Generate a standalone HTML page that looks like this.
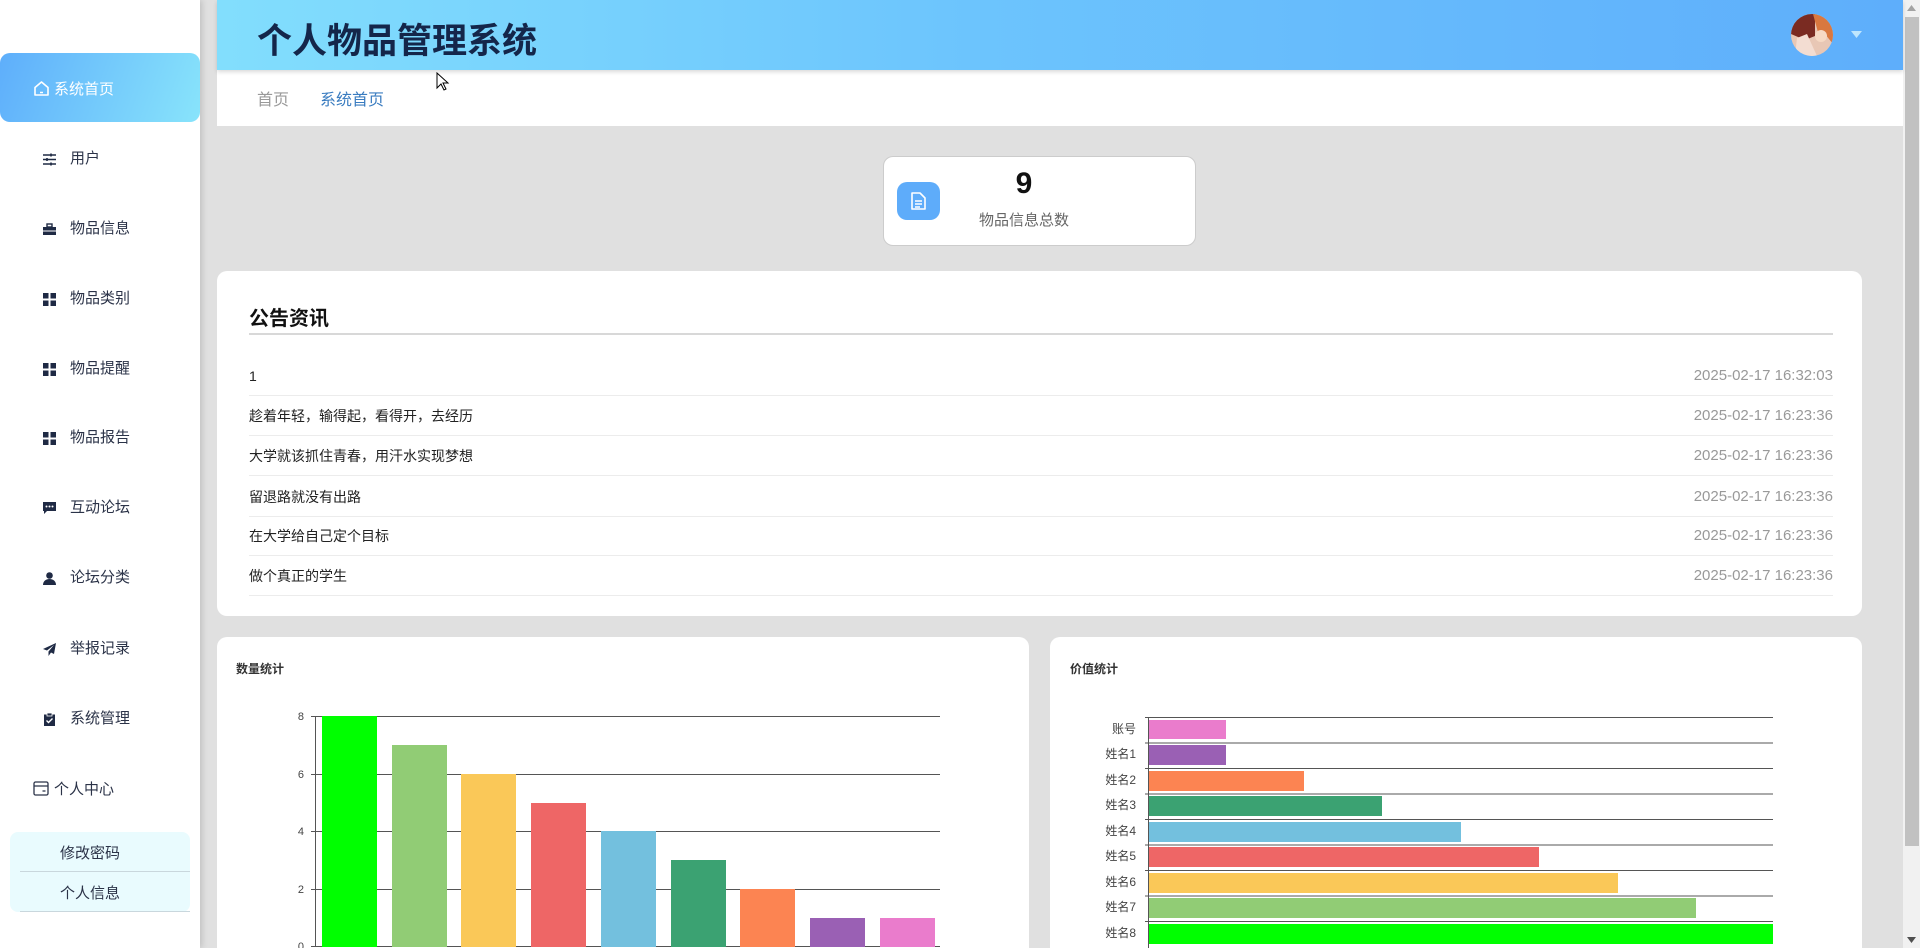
<!DOCTYPE html>
<html><head><meta charset="utf-8">
<style>
*{margin:0;padding:0;box-sizing:border-box}
html,body{width:1920px;height:948px;overflow:hidden}
body{background:#e0e0e0;font-family:"Liberation Sans","Noto Sans CJK SC",sans-serif;position:relative}
.abs{position:absolute}
#side{left:0;top:0;width:200px;height:948px;background:#fff;box-shadow:2px 0 6px rgba(0,0,0,.15);z-index:2}
.mi{position:absolute;left:0;width:200px;height:30px;line-height:30px;font-size:15px;color:#2b3348}
.mi .ic{position:absolute;left:43px;top:9px;width:13px;height:13px}
.mi span{position:absolute;left:70px}
#hdr{left:217px;top:0;width:1686px;height:70px;background:linear-gradient(90deg,#82defd 0%,#6cc4fd 45%,#5eaefb 100%);box-shadow:0 2px 4px rgba(0,0,0,.15);z-index:1}
.card{background:#fff;border-radius:10px}
.row{position:absolute;left:249px;width:1584px;height:40px;border-bottom:1px solid #ececec;font-size:14px;color:#222;line-height:40px}
.row b{font-weight:normal;position:absolute;right:0;color:#999;font-size:15px}
</style></head><body>
<div id="side" class="abs">
  <div class="abs" style="left:0;top:53px;width:200px;height:69px;border-radius:10px;background:linear-gradient(110deg,#5eaefb,#88e4fb)"></div>
  <svg class="abs" style="left:33px;top:80px" width="17" height="17" viewBox="0 0 17 17"><path d="M2 7.5L8.5 2 15 7.5V15H2Z" fill="none" stroke="#fff" stroke-width="1.6" stroke-linejoin="round"/><path d="M7 12.5h3" stroke="#fff" stroke-width="1.5"/></svg>
  <div class="abs" style="left:54px;top:78px;font-size:15px;color:#fff">系统首页</div>

  <div class="mi" style="top:144px"><svg class="ic" viewBox="0 0 13 13"><path d="M0 2h13M0 6.5h13M0 11h13" stroke="#1f2a44" stroke-width="1.4"/><path d="M8 0.5v3M4 5v3M8 9.5v3" stroke="#1f2a44" stroke-width="1.6"/></svg><span>用户</span></div>
  <div class="mi" style="top:214px"><svg class="ic" viewBox="0 0 13 13"><rect x="0" y="4" width="13" height="8" fill="#1f2a44"/><rect x="4" y="1" width="5" height="3" fill="none" stroke="#1f2a44" stroke-width="1.4"/><rect x="0" y="7.5" width="13" height="1" fill="#fff"/></svg><span>物品信息</span></div>
  <div class="mi" style="top:284px"><svg class="ic" viewBox="0 0 13 13" fill="#1f2a44"><rect width="5.5" height="5.5"/><rect x="7.5" width="5.5" height="5.5"/><rect y="7.5" width="5.5" height="5.5"/><rect x="7.5" y="7.5" width="5.5" height="5.5"/></svg><span>物品类别</span></div>
  <div class="mi" style="top:354px"><svg class="ic" viewBox="0 0 13 13" fill="#1f2a44"><rect width="5.5" height="5.5"/><rect x="7.5" width="5.5" height="5.5"/><rect y="7.5" width="5.5" height="5.5"/><rect x="7.5" y="7.5" width="5.5" height="5.5"/></svg><span>物品提醒</span></div>
  <div class="mi" style="top:423px"><svg class="ic" viewBox="0 0 13 13" fill="#1f2a44"><rect width="5.5" height="5.5"/><rect x="7.5" width="5.5" height="5.5"/><rect y="7.5" width="5.5" height="5.5"/><rect x="7.5" y="7.5" width="5.5" height="5.5"/></svg><span>物品报告</span></div>
  <div class="mi" style="top:493px"><svg class="ic" viewBox="0 0 13 13"><path d="M0 0h13v9H4l-3 3V9H0Z" fill="#1f2a44"/><circle cx="3.5" cy="4.5" r="1" fill="#fff"/><circle cx="6.5" cy="4.5" r="1" fill="#fff"/><circle cx="9.5" cy="4.5" r="1" fill="#fff"/></svg><span>互动论坛</span></div>
  <div class="mi" style="top:563px"><svg class="ic" viewBox="0 0 13 13" fill="#1f2a44"><circle cx="6.5" cy="3.5" r="3.3"/><path d="M0 13c0-4 3-6 6.5-6S13 9 13 13Z"/></svg><span>论坛分类</span></div>
  <div class="mi" style="top:634px"><svg class="ic" viewBox="0 0 13 13" fill="#1f2a44"><path d="M13 0L0 6l4 1.5L11 2 5.5 8.5V13l2.5-3.5 3 1.5Z"/></svg><span>举报记录</span></div>
  <div class="mi" style="top:704px"><svg class="ic" viewBox="0 0 13 13"><rect x="1" y="1.5" width="11" height="11.5" fill="#1f2a44"/><rect x="4" y="0" width="5" height="3" fill="#1f2a44" stroke="#fff" stroke-width=".8"/><path d="M3.5 7.5l2 2 4-4" fill="none" stroke="#fff" stroke-width="1.4"/></svg><span>系统管理</span></div>

  <svg class="abs" style="left:33px;top:781px" width="16" height="15" viewBox="0 0 16 15"><rect x="1" y="1" width="14" height="13" rx="1.5" fill="none" stroke="#2b3348" stroke-width="1.3"/><path d="M1 5h14M9.5 10h3" stroke="#2b3348" stroke-width="1.3"/></svg>
  <div class="abs" style="left:54px;top:778px;font-size:15px;color:#2b3348">个人中心</div>
  <div class="abs" style="left:10px;top:832px;width:180px;height:80px;border-radius:8px;background:#e9fbfe"></div>
  <div class="abs" style="left:20px;top:871px;width:170px;height:1px;background:#c9d7dd"></div>
  <div class="abs" style="left:20px;top:911px;width:170px;height:1px;background:#c9d7dd"></div>
  <div class="abs" style="left:60px;top:842px;font-size:15px;color:#2b3348">修改密码</div>
  <div class="abs" style="left:60px;top:882px;font-size:15px;color:#2b3348">个人信息</div>
</div>

<div id="hdr" class="abs">
  <div class="abs" style="left:40px;top:13px;font-size:35px;font-weight:bold;color:#14264a">个人物品管理系统</div>
  <svg class="abs" style="left:1574px;top:14px" width="42" height="42" viewBox="0 0 42 42"><defs><clipPath id="c"><circle cx="21" cy="21" r="21"/></clipPath></defs><g clip-path="url(#c)"><rect width="42" height="42" fill="#e8c7b5"/><path d="M0 0h24v22L14 26 0 20Z" fill="#7a2b22"/><path d="M22 0h20v30l-8-10-6 2Z" fill="#d9783f"/><path d="M6 24l10-4 10 22H4Z" fill="#f3ddd2"/><circle cx="30" cy="22" r="6" fill="#f6d9c4"/></g></svg>
  <svg class="abs" style="left:1634px;top:31px" width="11" height="7" viewBox="0 0 11 7"><path d="M0 0h11L5.5 7Z" fill="#bfe6fd"/></svg>
</div>
<div class="abs" style="left:217px;top:70px;width:1686px;height:56px;background:#fff"></div>
<div class="abs" style="left:257px;top:86px;font-size:16px;color:#999">首页</div>
<div class="abs" style="left:320px;top:86px;font-size:16px;color:#3a7cc0">系统首页</div>

<div class="abs card" style="left:883px;top:156px;width:313px;height:90px;border:1px solid #ccc"></div>
<div class="abs" style="left:897px;top:182px;width:43px;height:38px;border-radius:10px;background:#5eacfa"></div>
<svg class="abs" style="left:911px;top:192px" width="15" height="18" viewBox="0 0 15 18"><path d="M1 1h8l5 5v11H1Z" fill="none" stroke="#fff" stroke-width="1.6" stroke-linejoin="round"/><path d="M4 9h7M4 12h7M4 15h5" stroke="#fff" stroke-width="1.4"/></svg>
<div class="abs" style="left:984px;top:167px;width:80px;text-align:center;font-size:30px;font-weight:bold;color:#111">9</div>
<div class="abs" style="left:964px;top:209px;width:120px;text-align:center;font-size:15px;color:#666">物品信息总数</div>

<div class="abs card" style="left:217px;top:271px;width:1645px;height:345px"></div>
<div class="abs" style="left:249px;top:302px;font-size:20px;font-weight:bold;color:#111">公告资讯</div>
<div class="abs" style="left:249px;top:333px;width:1584px;height:2px;background:#d8d8d8"></div>
<div class="row" style="top:356px">1<b>2025-02-17 16:32:03</b></div>
<div class="row" style="top:396px">趁着年轻，输得起，看得开，去经历<b>2025-02-17 16:23:36</b></div>
<div class="row" style="top:436px">大学就该抓住青春，用汗水实现梦想<b>2025-02-17 16:23:36</b></div>
<div class="row" style="top:477px">留退路就没有出路<b>2025-02-17 16:23:36</b></div>
<div class="row" style="top:516px">在大学给自己定个目标<b>2025-02-17 16:23:36</b></div>
<div class="row" style="top:556px">做个真正的学生<b>2025-02-17 16:23:36</b></div>

<div class="abs" style="left:217px;top:637px;width:812px;height:311px;background:#fff;border-radius:10px 10px 0 0"></div>
<div class="abs" style="left:1050px;top:637px;width:812px;height:311px;background:#fff;border-radius:10px 10px 0 0"></div>
<div class="abs" style="left:236px;top:660px;font-size:12px;font-weight:bold;color:#333">数量统计</div>
<div class="abs" style="left:1070px;top:660px;font-size:12px;font-weight:bold;color:#333">价值统计</div>

<svg class="abs" style="left:0;top:0" width="1920" height="948" font-family="Liberation Sans" font-size="11" fill="#444">
  <g stroke="#555" stroke-width="1">
    <path d="M311 716.5H940M311 774.5H940M311 831.5H940M311 889.5H940M311 946.5H940M315.5 716V947"/>
  </g>
  <g text-anchor="end"><text x="304" y="720">8</text><text x="304" y="778">6</text><text x="304" y="835">4</text><text x="304" y="893">2</text><text x="304" y="950">0</text></g>
  <rect x="322" y="716" width="55" height="231" fill="#00ff00"/>
  <rect x="392" y="745" width="55" height="202" fill="#91cc75"/>
  <rect x="461" y="774" width="55" height="173" fill="#fac858"/>
  <rect x="531" y="803" width="55" height="144" fill="#ee6666"/>
  <rect x="601" y="831" width="55" height="116" fill="#73c0de"/>
  <rect x="671" y="860" width="55" height="87" fill="#3ba272"/>
  <rect x="740" y="889" width="55" height="58" fill="#fc8452"/>
  <rect x="810" y="918" width="55" height="29" fill="#9a60b4"/>
  <rect x="880" y="918" width="55" height="29" fill="#ea7ccc"/>

  <g stroke="#555" stroke-width="1">
    <path d="M1145 717.5H1773M1145 743H1773M1145 768.5H1773M1145 794H1773M1145 819.5H1773M1145 845H1773M1145 870.5H1773M1145 896H1773M1145 921.5H1773M1148.5 717V948"/>
  </g>
  <rect x="1149" y="720" width="77" height="19" fill="#ea7ccc"/>
  <rect x="1149" y="745" width="77" height="20" fill="#9a60b4"/>
  <rect x="1149" y="771" width="155" height="20" fill="#fc8452"/>
  <rect x="1149" y="796" width="233" height="20" fill="#3ba272"/>
  <rect x="1149" y="822" width="312" height="20" fill="#73c0de"/>
  <rect x="1149" y="847" width="390" height="20" fill="#ee6666"/>
  <rect x="1149" y="873" width="469" height="20" fill="#fac858"/>
  <rect x="1149" y="898" width="547" height="20" fill="#91cc75"/>
  <rect x="1149" y="924" width="624" height="20" fill="#00ff00"/>
  <g text-anchor="end" font-family="Liberation Sans,Noto Sans CJK SC,sans-serif" font-size="12">
    <text x="1136" y="733">账号</text><text x="1136" y="758">姓名1</text><text x="1136" y="784">姓名2</text><text x="1136" y="809">姓名3</text><text x="1136" y="835">姓名4</text><text x="1136" y="860">姓名5</text><text x="1136" y="886">姓名6</text><text x="1136" y="911">姓名7</text><text x="1136" y="937">姓名8</text>
  </g>
</svg>

<div class="abs" style="left:1903px;top:0;width:17px;height:948px;background:#f1f1f1"></div>
<div class="abs" style="left:1905px;top:17px;width:14px;height:829px;background:#c1c1c1"></div>
<svg class="abs" style="left:1907px;top:5px" width="9" height="6"><path d="M0 6L4.5 0 9 6Z" fill="#a3a3a3"/></svg>
<svg class="abs" style="left:1907px;top:937px" width="9" height="6"><path d="M0 0h9L4.5 6Z" fill="#505050"/></svg>
<svg class="abs" style="left:436px;top:72px" width="14" height="20" viewBox="0 0 14 20"><path d="M1 1v15l4-4 3 6 2-1-3-6h5Z" fill="#fff" stroke="#000" stroke-width="1"/></svg>
</body></html>
